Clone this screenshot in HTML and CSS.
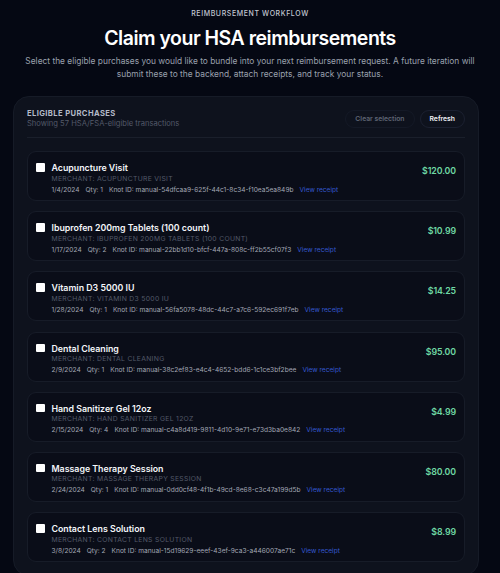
FILE: index.html
```html
<!DOCTYPE html>
<html>
<head>
<meta charset="utf-8">
<link rel="stylesheet" href="styles.css">
</head>
<body>
<div class="page">
  <header class="hero">
    <div class="eyebrow">REIMBURSEMENT WORKFLOW</div>
    <h1 class="title">Claim your HSA reimbursements</h1>
    <p class="lead">Select the eligible purchases you would like to bundle into your next reimbursement request. A future iteration will submit these to the backend, attach receipts, and track your status.</p>
  </header>
  <section class="panel">
    <div class="panel-head">
      <div>
        <div class="panel-title">ELIGIBLE PURCHASES</div>
        <div class="panel-sub">Showing 57 HSA/FSA-eligible transactions</div>
      </div>
      <div class="actions">
        <button class="btn btn-muted">Clear selection</button>
        <button class="btn">Refresh</button>
      </div>
    </div>
    <div class="list">
      <div class="card">
        <span class="check"></span>
        <div class="info">
          <div class="name">Acupuncture Visit</div>
          <div class="merchant">MERCHANT: ACUPUNCTURE VISIT</div>
          <div class="meta"><span>1/4/2024</span><span>Qty: 1</span><span>Knot ID: manual-54dfcaa9-625f-44c1-8c34-f10ea5ea849b</span><a class="link">View receipt</a></div>
        </div>
        <div class="amount">$120.00</div>
      </div>
      <div class="card">
        <span class="check"></span>
        <div class="info">
          <div class="name">Ibuprofen 200mg Tablets (100 count)</div>
          <div class="merchant">MERCHANT: IBUPROFEN 200MG TABLETS (100 COUNT)</div>
          <div class="meta"><span>1/17/2024</span><span>Qty: 2</span><span>Knot ID: manual-22bb1d10-bfcf-447a-808c-ff2b55cf07f3</span><a class="link">View receipt</a></div>
        </div>
        <div class="amount">$10.99</div>
      </div>
      <div class="card">
        <span class="check"></span>
        <div class="info">
          <div class="name">Vitamin D3 5000 IU</div>
          <div class="merchant">MERCHANT: VITAMIN D3 5000 IU</div>
          <div class="meta"><span>1/28/2024</span><span>Qty: 1</span><span>Knot ID: manual-56fa5078-48dc-44c7-a7c6-592ec691f7eb</span><a class="link">View receipt</a></div>
        </div>
        <div class="amount">$14.25</div>
      </div>
      <div class="card">
        <span class="check"></span>
        <div class="info">
          <div class="name">Dental Cleaning</div>
          <div class="merchant">MERCHANT: DENTAL CLEANING</div>
          <div class="meta"><span>2/9/2024</span><span>Qty: 1</span><span>Knot ID: manual-38c2ef83-e4c4-4652-bdd6-1c1ce3bf2bee</span><a class="link">View receipt</a></div>
        </div>
        <div class="amount">$95.00</div>
      </div>
      <div class="card">
        <span class="check"></span>
        <div class="info">
          <div class="name">Hand Sanitizer Gel 12oz</div>
          <div class="merchant">MERCHANT: HAND SANITIZER GEL 12OZ</div>
          <div class="meta"><span>2/15/2024</span><span>Qty: 4</span><span>Knot ID: manual-c4a8d419-9811-4d10-9e71-e73d3ba0e842</span><a class="link">View receipt</a></div>
        </div>
        <div class="amount">$4.99</div>
      </div>
      <div class="card">
        <span class="check"></span>
        <div class="info">
          <div class="name">Massage Therapy Session</div>
          <div class="merchant">MERCHANT: MASSAGE THERAPY SESSION</div>
          <div class="meta"><span>2/24/2024</span><span>Qty: 1</span><span>Knot ID: manual-0dd0cf48-4f1b-49cd-8e68-c3c47a199d5b</span><a class="link">View receipt</a></div>
        </div>
        <div class="amount">$80.00</div>
      </div>
      <div class="card">
        <span class="check"></span>
        <div class="info">
          <div class="name">Contact Lens Solution</div>
          <div class="merchant">MERCHANT: CONTACT LENS SOLUTION</div>
          <div class="meta"><span>3/8/2024</span><span>Qty: 2</span><span>Knot ID: manual-15d19629-eeef-43ef-9ca3-a446007ae71c</span><a class="link">View receipt</a></div>
        </div>
        <div class="amount">$8.99</div>
      </div>
    </div>
  </section>
</div>
</body>
</html>
```

FILE: styles.css
```css
* { box-sizing: border-box; }
html, body {
  margin: 0;
  padding: 0;
  background: #050813;
  height: 573px;
  overflow: hidden;
}
body {
  font-family: Inter, "Noto Sans", sans-serif;
  color: #f2f4f8;
}
.page {
  padding: 9px 13px 0 13px;
  width: 479px;
  margin: 0;
}
.hero {
  text-align: center;
  width: 474px;
}
.eyebrow {
  font-size: 7px;
  letter-spacing: 0.6px;
  color: #c3c7d2;
  font-weight: 500;
  line-height: 10px;
}
.title {
  margin: 7px 0 0 0;
  font-size: 19.5px;
  font-weight: 600;
  line-height: 24px;
  color: #ffffff;
  letter-spacing: -0.5px;
}
.lead {
  margin: 5px 0 0 0;
  font-size: 8.4px;
  line-height: 13px;
  color: #9aa0ad;
  padding: 0 4px;
}
.panel {
  margin-top: 15px;
  background: #0e121d;
  border: 1px solid #161b27;
  border-radius: 16px;
  padding: 11px 13px 0 13px;
  width: 466px;
  height: 480px;
}
.panel-head {
  display: flex;
  justify-content: space-between;
  align-items: center;
  padding: 0 0 8px 0;
  border-bottom: 1px solid #1a1f2b;
}
.panel-title {
  font-size: 7.6px;
  font-weight: 700;
  letter-spacing: 0.4px;
  color: #b4bac8;
  line-height: 11px;
}
.panel-sub {
  font-size: 7.6px;
  color: #535969;
  line-height: 10px;
}
.actions {
  display: flex;
  gap: 5px;
}
.btn {
  font-family: Inter, "Noto Sans", sans-serif;
  font-size: 6.8px;
  font-weight: 600;
  color: #eef0f5;
  background: #0e121d;
  border: 1px solid #1b2030;
  border-radius: 10px;
  height: 18px;
  padding: 0 9px;
  line-height: 16px;
}
.btn-muted {
  color: #5f6574;
  border-color: #141926;
  padding: 0 9px;
}
.list {
  display: flex;
  flex-direction: column;
  gap: 10.2px;
  padding-top: 13px;
}
.card {
  display: flex;
  align-items: flex-start;
  background: #0a0d18;
  border: 1px solid #171c28;
  border-radius: 9px;
  height: 50px;
  padding: 10px 8px 0 8px;
}
.check {
  width: 8.5px;
  height: 8.5px;
  background: #ffffff;
  border-radius: 1px;
  margin-top: 1px;
  flex: none;
}
.info {
  flex: 1;
  margin-left: 7px;
  min-width: 0;
}
.name {
  font-size: 8.8px;
  font-weight: 600;
  color: #f4f6fa;
  line-height: 11px;
}
.merchant {
  font-size: 6.8px;
  letter-spacing: 0.3px;
  color: #545a69;
  line-height: 10px;
  margin-top: 0.5px;
}
.meta {
  font-size: 6.6px;
  color: #a3a8b5;
  line-height: 10px;
  display: flex;
  gap: 6px;
  margin-top: 1px;
}
.link {
  color: #3559d1;
}
.amount {
  font-size: 8.8px;
  font-weight: 600;
  color: #6fd8a4;
  line-height: 10px;
  margin-top: 4px;
  letter-spacing: -0.1px;
}
```
